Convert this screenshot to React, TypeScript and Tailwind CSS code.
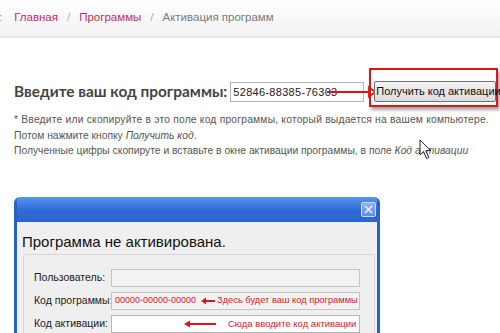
import React from "react";

const fieldRows = [
  { label: "Пользователь:", white: false },
  { label: "Код программы:", white: false },
  { label: "Код активации:", white: true },
];

function Cursor() {
  return (
    <svg className="absolute left-[419px] top-[139px]" width="14" height="22" viewBox="0 0 14 22">
      <path d="M1 1 L1 16 L4.5 12.5 L7.5 19.5 L9.8 18.5 L6.8 11.6 L11.5 11.6 Z" fill="#fff" stroke="#222" strokeWidth="1" />
    </svg>
  );
}

function AnnotationRow({ index }: { index: number }) {
  if (index === 1) {
    return (
      <div className="flex items-center h-full pl-[3px] text-[#e8111b] whitespace-nowrap">
        <span className="text-[9px]">00000-00000-00000</span>
        <svg className="ml-[5px] shrink-0" width="14" height="8" viewBox="0 0 14 8">
          <path d="M14 4 H4" stroke="#e8111b" strokeWidth="2" />
          <path d="M0 4 L5 0.5 L5 7.5 Z" fill="#e8111b" />
        </svg>
        <span className="ml-[2px] text-[9.3px]">Здесь будет ваш код программы</span>
      </div>
    );
  }
  if (index === 2) {
    return (
      <div className="flex items-center h-full pl-[72px] text-[#e8111b] whitespace-nowrap">
        <svg className="shrink-0" width="32" height="8" viewBox="0 0 32 8">
          <path d="M32 4 H4" stroke="#e8111b" strokeWidth="2" />
          <path d="M0 4 L6 0.5 L6 7.5 Z" fill="#e8111b" />
        </svg>
        <span className="ml-[12px] text-[9.5px]">Сюда вводите код активации</span>
      </div>
    );
  }
  return null;
}

export default function App() {
  return (
    <div className="relative w-[500px] h-[333px] overflow-hidden bg-white font-['Liberation_Sans',sans-serif]">
      {/* breadcrumbs */}
      <div className="h-[38px] flex items-start pt-[9px] bg-gradient-to-b from-[#ffffff] to-[#f2f2f4] border-b-2 border-[#e6e6e8] text-[11.5px] whitespace-nowrap">
        <span className="text-[#999] -ml-[1px]">:</span>
        <span className="ml-[12px] text-[#c42b5b]">Главная</span>
        <span className="ml-[9px] text-[#aaa]">/</span>
        <span className="ml-[9px] text-[#c42b5b]">Программы</span>
        <span className="ml-[9px] text-[#aaa]">/</span>
        <span className="ml-[9px] text-[#7a7a7a]">Активация программ</span>
      </div>

      {/* code form */}
      <div className="mt-[42px] flex items-center pl-[14px] h-[24px] whitespace-nowrap">
        <h2 className="shrink-0 text-[15.4px] font-bold text-[#444] font-['Lato',sans-serif]">
          Введите ваш код программы:
        </h2>
        <div className="relative shrink-0 ml-[3px] w-[134px] h-[20px] border border-[#b5b5b5] bg-white flex items-center pl-[2px] text-[11px] text-[#222] tracking-[0.3px]">
          52846-88385-76303
          <svg className="absolute left-[96px] top-[3px]" width="50" height="12" viewBox="0 0 50 12">
            <path d="M0 6 H42" stroke="#e11414" strokeWidth="2" />
            <path d="M42 1.5 L48.5 6 L42 10.5 Z" fill="none" stroke="#e11414" strokeWidth="1.8" />
          </svg>
        </div>
        <div className="relative shrink-0 self-start -mt-[2px] ml-[10px]">
          <div className="absolute -left-[5px] -top-[10px] w-[129px] h-[39px] border-2 border-[#e01515] shadow-[2px_3px_3px_rgba(0,0,0,0.35)]" />
          <button className="relative h-[21px] w-[122px] border border-[#707070] rounded-[2px] bg-gradient-to-b from-[#f4f4f4] to-[#dcdcdc] text-[11px] text-[#111] whitespace-nowrap px-[1px]">
            Получить код активации
          </button>
        </div>
      </div>

      {/* hint text */}
      <div className="mt-[8px] pl-[14px] text-[10.3px] leading-[15.7px] text-[#555] whitespace-nowrap">
        <p className="tracking-[0.2px]">* Введите или скопируйте в это поле код программы, который выдается на вашем компьютере.</p>
        <p>
          Потом нажмите кнопку <i>Получить код</i>.
        </p>
        <p>
          Полученные цифры скопируте и вставьте в окне активации программы, в поле <i>Код активации</i>
        </p>
      </div>

      {/* activation window */}
      <div className="mt-[38px] ml-[14px] w-[366px] h-[200px] rounded-t-[6px] overflow-hidden border-x-[3px] border-[#2c62c8] bg-[#efefef]">
        <div className="h-[25px] -mx-[3px] flex items-center justify-end pr-[4px] bg-gradient-to-b from-[#5a95ee] via-[#2f6cd6] to-[#2b63cc]">
          <div className="w-[15px] h-[15px] rounded-[2px] border border-[#c9d9f5] bg-gradient-to-b from-[#8fb3ef] to-[#5b8ce0] flex items-center justify-center">
            <svg width="9" height="9" viewBox="0 0 9 9">
              <path d="M1 1 L8 8 M8 1 L1 8" stroke="#eaf1fd" strokeWidth="1.6" />
            </svg>
          </div>
        </div>
        <div className="pl-[5px] pt-[11px] text-[15px] text-[#111] leading-[18px] whitespace-nowrap">Программа не активирована.</div>
        <div className="mt-[3px] ml-[6px] mr-[2px] border border-[#d6d6d6] rounded-[3px] pt-[14px] pl-[10px] pb-[10px] flex flex-col gap-[5px]">
          {fieldRows.map((r, i) => (
            <div key={i} className="flex items-center h-[18px]">
              <div className="w-[77px] shrink-0 text-[10.5px] text-[#222] whitespace-nowrap">{r.label}</div>
              <div className={`w-[249px] shrink-0 h-[18px] border ${r.white ? "border-[#b7b7b7] bg-white" : "border-[#c4c4c4] bg-[#f2f2f2]"}`}>
                <AnnotationRow index={i} />
              </div>
            </div>
          ))}
        </div>
      </div>

      <Cursor />
    </div>
  );
}
